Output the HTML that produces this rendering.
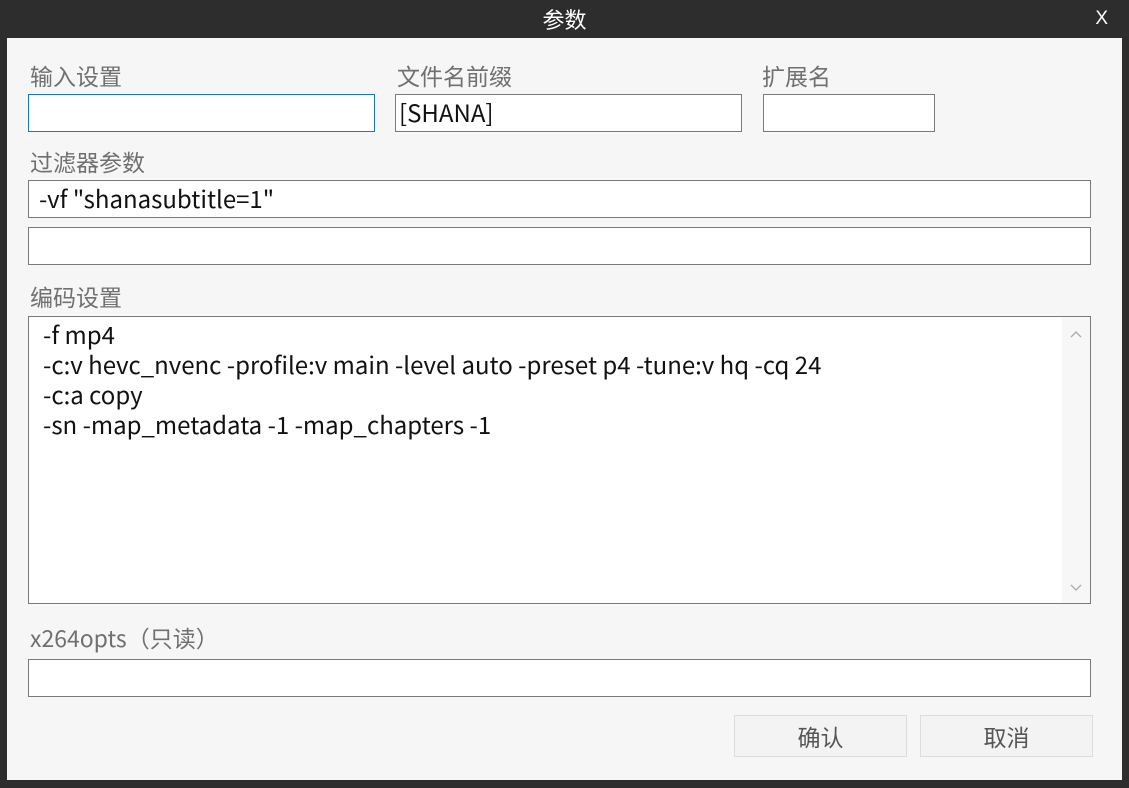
<!DOCTYPE html>
<html><head><meta charset="utf-8"><style>
*{box-sizing:border-box;margin:0;padding:0}
body{width:1129px;height:788px;background:#2d2d2d;position:relative;overflow:hidden;font-family:"Noto Sans CJK SC","Liberation Sans",sans-serif}
.title{position:absolute;left:0;top:0;width:1129px;height:38px;color:#fff;font-size:22px;text-align:center;line-height:38px}
.x{position:absolute;right:21px;top:0;line-height:38px;color:#fff;font-size:19px;font-family:"Liberation Sans",sans-serif}
.c{position:absolute;left:7px;top:38px;width:1115px;height:742px;background:#f6f6f6}
.l{position:absolute;font-size:23px;color:#707070;line-height:26px}
.i{position:absolute;background:#fff;border:1px solid #7a7a7a;font-size:24px;color:#111;padding-left:3px;line-height:34px}
.b{position:absolute;border:1px solid #dcdcdc;background:#f3f3f3;font-size:23px;color:#555;text-align:center;line-height:40px}
</style></head><body>
<div class="title">参数</div><div class="x">X</div>
<div class="c"></div>
<div class="l" style="left:30px;top:62px">输入设置</div>
<div class="l" style="left:397px;top:62px">文件名前缀</div>
<div class="l" style="left:762px;top:62px">扩展名</div>
<div class="i" style="left:28px;top:94px;width:347px;height:38px;border-color:#1a76c8"></div>
<div class="i" style="left:395px;top:94px;width:347px;height:38px">[SHANA]</div>
<div class="i" style="left:763px;top:94px;width:172px;height:38px"></div>
<div class="l" style="left:30px;top:148px">过滤器参数</div>
<div class="i" style="left:28px;top:180px;width:1063px;height:38px;padding-left:10px">-vf "shanasubtitle=1"</div>
<div class="i" style="left:28px;top:227px;width:1063px;height:38px"></div>
<div class="l" style="left:30px;top:283px">编码设置</div>
<div class="i" style="left:28px;top:316px;width:1063px;height:288px;padding:2px 0 0 14px;line-height:30px">-f mp4<br>-c:v hevc_nvenc -profile:v main -level auto -preset p4 -tune:v hq -cq 24<br>-c:a copy<br>-sn -map_metadata -1 -map_chapters -1
<div style="position:absolute;right:0;top:0;width:28px;height:286px;background:#f7f7f7"></div>
<svg style="position:absolute;right:7px;top:12px" width="14" height="10"><path d="M2 8 L7 3 L12 8" fill="none" stroke="#aaa" stroke-width="1.3"/></svg>
<svg style="position:absolute;right:7px;bottom:10px" width="14" height="10"><path d="M2 2 L7 7 L12 2" fill="none" stroke="#aaa" stroke-width="1.3"/></svg>
</div>
<div class="l" style="left:30px;top:624px">x264opts（只读）</div>
<div class="i" style="left:28px;top:659px;width:1063px;height:38px"></div>
<div class="b" style="left:734px;top:715px;width:173px;height:42px">确认</div>
<div class="b" style="left:920px;top:715px;width:173px;height:42px">取消</div>
</body></html>
